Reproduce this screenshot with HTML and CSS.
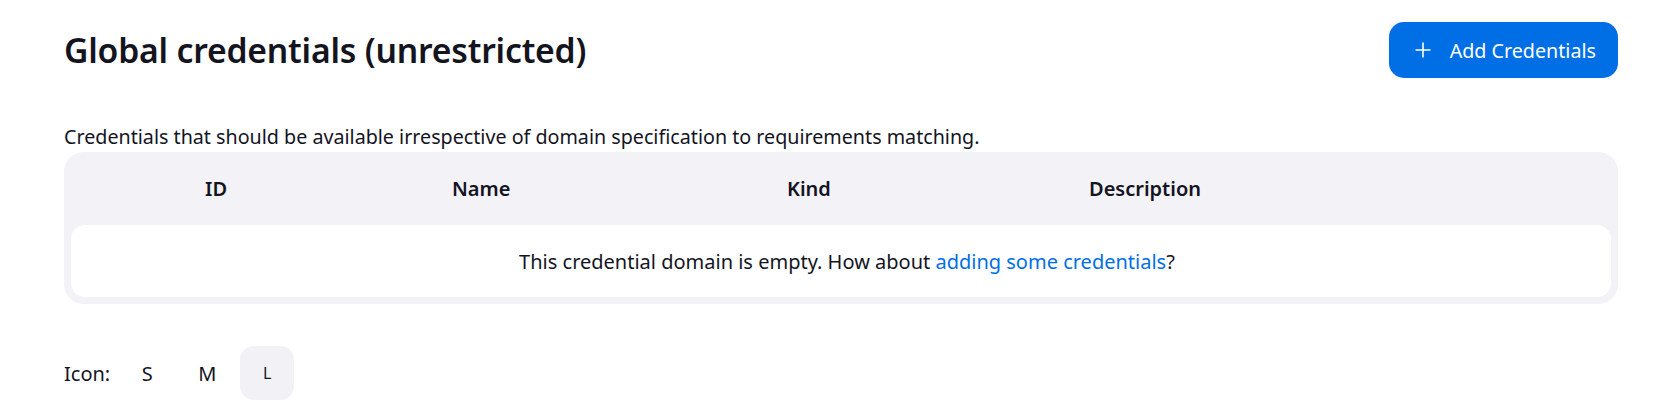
FILE: index.html
```html
<!DOCTYPE html>
<html lang="en">
<head>
<meta charset="utf-8">
<title>Global credentials (unrestricted)</title>
<link rel="stylesheet" href="styles.css">
</head>
<body>
<div class="page">
  <header class="app-bar">
    <h1 class="title">Global credentials (unrestricted)</h1>
    <a class="btn-primary" href="#">
      <svg class="plus" width="16" height="16" viewBox="0 0 16 16" aria-hidden="true"><path d="M8 0.5v15M0.5 8h15" stroke="#fff" stroke-width="1.6" fill="none"/></svg>
      <span>Add Credentials</span>
    </a>
  </header>
  <p class="desc">Credentials that should be available irrespective of domain specification to requirements matching.</p>
  <div class="cred-table">
    <div class="thead">
      <span></span>
      <span>ID</span>
      <span>Name</span>
      <span>Kind</span>
      <span>Description</span>
    </div>
    <div class="tbody">
      <div class="empty">This credential domain is empty. How about <a href="#">adding some credentials</a>?</div>
    </div>
  </div>
  <div class="icon-size">
    <span class="icon-label">Icon:</span>
    <a class="size" href="#">S</a>
    <a class="size" href="#">M</a>
    <span class="size size-active">L</span>
  </div>
</div>
</body>
</html>
```
FILE: styles.css
```css
html, body {
  margin: 0;
  padding: 0;
  background: #ffffff;
}
body {
  font-family: "Noto Sans", "Open Sans", "DejaVu Sans", sans-serif;
  color: #14141f;
}
.page {
  padding: 22px 57px 0 64px;
}
.app-bar {
  display: flex;
  align-items: center;
  justify-content: space-between;
  height: 56px;
}
.title {
  margin: 0;
  font-size: 33.7px;
  font-weight: 600;
  line-height: 56px;
  letter-spacing: -0.2px;
}
.btn-primary {
  display: flex;
  align-items: center;
  gap: 19px;
  height: 56px;
  box-sizing: border-box;
  padding: 0 22px 0 26px;
  background: #006fe6;
  color: #ffffff;
  border-radius: 15px;
  text-decoration: none;
  font-size: 19.7px;
  font-weight: 400;
}
.plus {
  display: block;
}
.desc {
  margin: 45px 0 0;
  font-size: 19.7px;
  line-height: 28px;
}
.cred-table {
  margin-top: 1px;
  background: #f2f2f7;
  border-radius: 20px;
  padding: 0 7px 7px;
}
.thead {
  display: grid;
  grid-template-columns: 134px 247px 335px 302px 1fr;
  height: 73px;
  align-items: center;
  font-size: 20px;
  font-weight: 600;
}
.tbody {
  background: #ffffff;
  border-radius: 14px;
  height: 72px;
  display: flex;
  align-items: center;
  justify-content: center;
}
.empty {
  font-size: 20px;
  padding-left: 12px;
}
.empty a {
  color: #006fe6;
  text-decoration: none;
}
.icon-size {
  display: flex;
  align-items: center;
  margin-top: 42px;
  font-size: 20px;
}
.icon-label {
  margin-right: 10px;
}
.size {
  width: 54px;
  height: 54px;
  display: flex;
  align-items: center;
  justify-content: center;
  color: #14141f;
  text-decoration: none;
  border-radius: 14px;
  margin-right: 6px;
}
.size-active {
  background: #f1f1f6;
  font-size: 16px;
}
```
